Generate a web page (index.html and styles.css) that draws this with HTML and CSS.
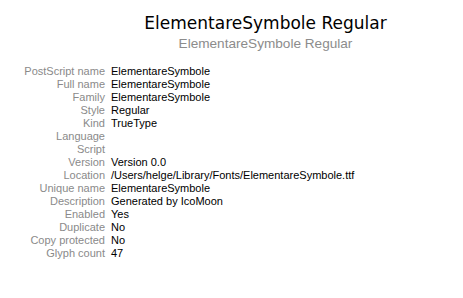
FILE: index.html
```html
<!DOCTYPE html>
<html>
<head>
<meta charset="utf-8">
<link rel="stylesheet" href="styles.css">
</head>
<body>
<div class="page">
  <header class="head">
    <h1 class="title">ElementareSymbole Regular</h1>
    <div class="subtitle">ElementareSymbole Regular</div>
  </header>
  <dl class="info">
    <dt>PostScript name</dt><dd>ElementareSymbole</dd>
    <dt>Full name</dt><dd>ElementareSymbole</dd>
    <dt>Family</dt><dd>ElementareSymbole</dd>
    <dt>Style</dt><dd>Regular</dd>
    <dt>Kind</dt><dd>TrueType</dd>
    <dt>Language</dt><dd></dd>
    <dt>Script</dt><dd></dd>
    <dt>Version</dt><dd>Version 0.0</dd>
    <dt>Location</dt><dd>/Users/helge/Library/Fonts/ElementareSymbole.ttf</dd>
    <dt>Unique name</dt><dd>ElementareSymbole</dd>
    <dt>Description</dt><dd>Generated by IcoMoon</dd>
    <dt>Enabled</dt><dd>Yes</dd>
    <dt>Duplicate</dt><dd>No</dd>
    <dt>Copy protected</dt><dd>No</dd>
    <dt>Glyph count</dt><dd>47</dd>
  </dl>
</div>
</body>
</html>
```
FILE: styles.css
```css
html, body {
  margin: 0;
  padding: 0;
  background: #ffffff;
}
.page {
  width: 463px;
  height: 298px;
  box-sizing: border-box;
  padding-top: 12px;
}
.head {
  display: flex;
  flex-direction: column;
  align-items: center;
  padding-left: 68px;
}
.title {
  margin: 0;
  font-family: "DejaVu Sans", sans-serif;
  font-weight: normal;
  font-size: 17px;
  line-height: 22px;
  color: #000;
}
.subtitle {
  margin-top: 3px;
  font-family: "Liberation Sans", Arial, sans-serif;
  font-size: 13.6px;
  line-height: 14px;
  color: #8c8c8c;
}
.info {
  margin: 14px 0 0 0;
  display: grid;
  grid-template-columns: 105px 1fr;
  column-gap: 6px;
  font-family: "Liberation Sans", Arial, sans-serif;
  font-size: 11px;
  line-height: 13px;
}
.info dt {
  text-align: right;
  color: #8a8a8a;
}
.info dd {
  margin: 0;
  color: #000;
  min-height: 13px;
}
```
